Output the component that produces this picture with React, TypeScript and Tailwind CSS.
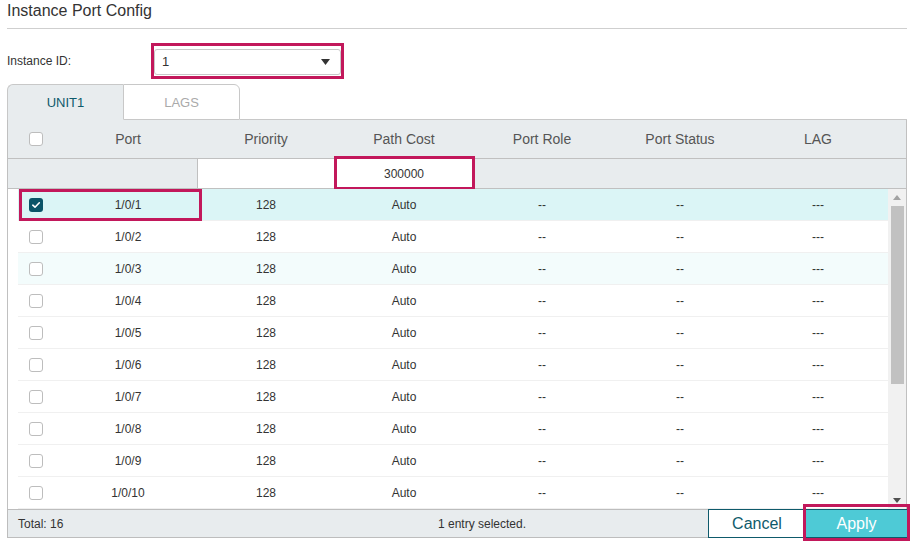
import React from "react";

const rows = Array.from({ length: 10 }, (_, i) => `1/0/${i + 1}`);

function Box({ checked }: { checked?: boolean }) {
  if (checked) {
    return (
      <div className="w-[14px] h-[14px] rounded-[3px] bg-[#0a5468] flex items-center justify-center">
        <svg width="10" height="10" viewBox="0 0 10 10">
          <path d="M1.8 5.2 L4 7.2 L8.3 2.8" fill="none" stroke="#fff" strokeWidth="1.6" strokeLinecap="round" strokeLinejoin="round" />
        </svg>
      </div>
    );
  }
  return <div className="w-[14px] h-[14px] rounded-[3px] border border-[#bdbdbd] bg-white" />;
}

export default function App() {
  return (
    <div className="w-[910px] h-[541px] bg-white overflow-hidden relative text-[#333]" style={{ fontFamily: '"Liberation Sans", Arial, sans-serif' }}>
      <div className="pl-[7px] pr-[3px]">
        <div className="h-[29px] border-b border-[#cfcfcf] text-[16px] leading-[22px] text-[#333]">Instance Port Config</div>
        <div className="mt-[14px] flex items-center h-[36px]">
          <div className="w-[144px] text-[12px] text-[#333]">Instance ID:</div>
          <div className="w-[193px] h-[36px] border-[3px] border-[#c2185b]">
            <div className="mt-[3px] h-[26px] border border-[#c8c8c8] rounded-[3px] flex items-center justify-between pl-[7px] pr-[10px] text-[13px]">
              <span>1</span>
              <svg width="9" height="6" viewBox="0 0 9 6"><path d="M0 0 H9 L4.5 6 Z" fill="#333" /></svg>
            </div>
          </div>
        </div>
        <div className="mt-[5px] flex h-[36px]">
          <div className="w-[116px] bg-[#e8ecee] border-l border-t border-[#c8c8c8] rounded-tl-[6px] flex items-center justify-center pt-[1px] text-[13px] text-[#0e5a6b]">UNIT1</div>
          <div className="w-[117px] bg-white border border-[#c8c8c8] rounded-tr-[6px] flex items-center justify-center pt-[1px] text-[13px] text-[#aaa]">LAGS</div>
          <div className="flex-1 border-b border-[#c8c8c8]" />
        </div>
        <div className="border-l border-r border-[#c0c0c0] w-[900px]">
          <div className="h-[39px] bg-[#e8ecee] border-b border-[#c0c0c0] pl-[10px] grid grid-cols-[41px_repeat(6,138px)] items-center text-[14px] text-[#555]">
            <div className="pl-[11px]"><Box /></div>
            <div className="text-center">Port</div>
            <div className="text-center">Priority</div>
            <div className="text-center">Path Cost</div>
            <div className="text-center">Port Role</div>
            <div className="text-center">Port Status</div>
            <div className="text-center">LAG</div>
          </div>
          <div className="h-[30px] bg-[#e8ecee] border-b border-[#c0c0c0] flex relative">
            <div className="w-[189px]" />
            <div className="w-[276px] bg-white border-l border-[#c0c0c0] flex">
              <div className="w-[137px]" />
              <div className="w-[138px] flex items-center justify-center text-[12px] text-[#333]">300000</div>
            </div>
            <div className="absolute left-[326px] top-[-3px] w-[141px] h-[34px] border-[3px] border-[#c2185b]" />
          </div>
          <div className="flex h-[320px] pl-[10px]">
            <div className="w-[871px] relative">
              {rows.map((p, i) => (
                <div
                  key={p}
                  className={`h-[32px] grid grid-cols-[41px_repeat(6,138px)] items-center text-[12px] text-[#333] border-b border-[#f0f0f0] ${i === 0 ? "bg-[#dbf5f6]" : i === 2 ? "bg-[#f3fcfc]" : "bg-white"}`}
                >
                  <div className="pl-[11px]"><Box checked={i === 0} /></div>
                  <div className="text-center">{p}</div>
                  <div className="text-center">128</div>
                  <div className="text-center">Auto</div>
                  <div className="text-center">--</div>
                  <div className="text-center">--</div>
                  <div className="text-center">---</div>
                </div>
              ))}
              <div className="absolute left-[1px] top-0 w-[183px] h-[32px] border-[3px] border-[#c2185b]" />
            </div>
            <div className="w-[18px] bg-[#f1f1f1] flex flex-col items-center">
              <svg className="mt-[6px]" width="8" height="5" viewBox="0 0 8 5"><path d="M0 5 L4 0 L8 5 Z" fill="#a3a3a3" /></svg>
              <div className="mt-[6px] w-[13px] h-[178px] bg-[#c1c1c1]" />
              <div className="flex-1" />
              <svg className="mb-[6px]" width="8" height="5" viewBox="0 0 8 5"><path d="M0 0 L8 0 L4 5 Z" fill="#505050" /></svg>
            </div>
          </div>
        </div>
        <div className="flex h-[29px] w-[900px]">
          <div className="w-[701px] bg-[#e8ecee] border-l border-t border-b border-[#bdbdbd] flex items-center pl-[10px] text-[12px] text-[#333]">
            <div className="w-[420px]">Total: 16</div>
            <div>1 entry selected.</div>
          </div>
          <div className="w-[98px] border border-[#0e5a6b] bg-white flex items-center justify-center text-[16px] text-[#0e5a6b]">Cancel</div>
          <div className="w-[101px] bg-[#4ecad6] border-t border-b border-[#0e5a6b] flex items-center justify-center text-[16px] text-white">Apply</div>
        </div>
      </div>
      <div className="absolute left-[803px] top-[504px] w-[107px] h-[37px] border-[3px] border-[#c2185b]" />
    </div>
  );
}
